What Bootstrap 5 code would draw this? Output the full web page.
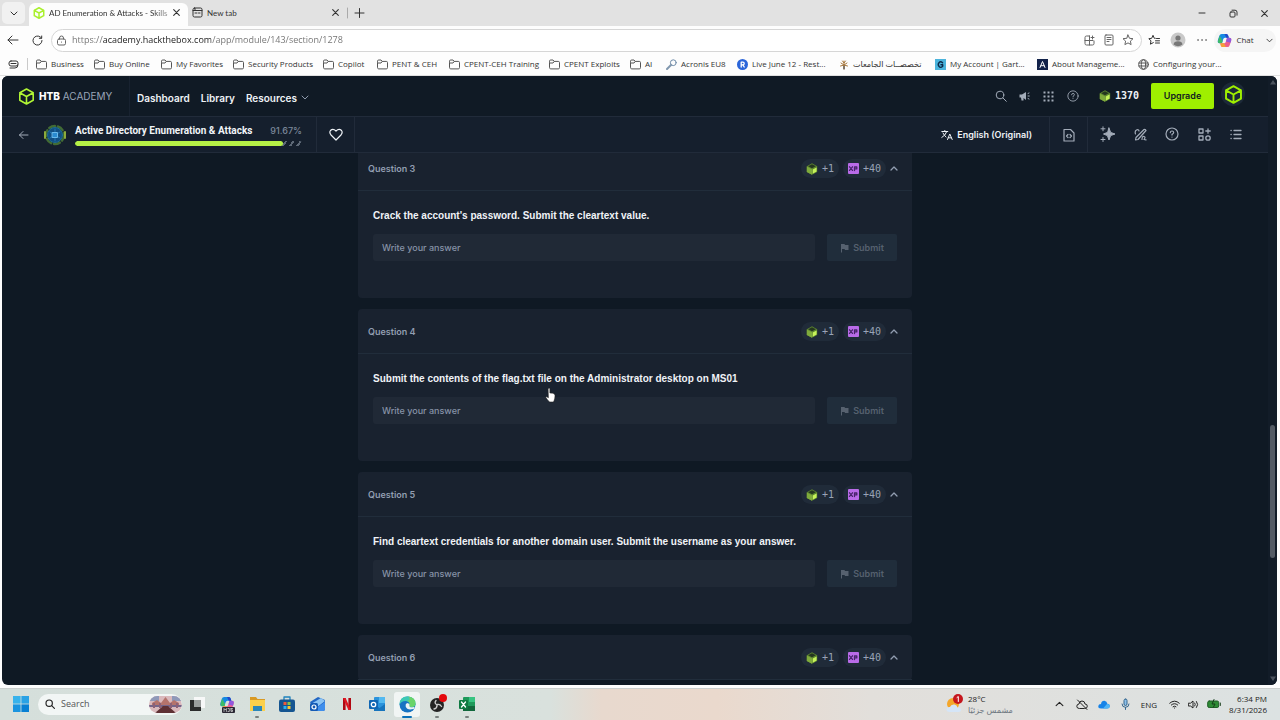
<!DOCTYPE html>
<html lang="en">
<head>
<meta charset="utf-8">
<meta name="viewport" content="width=device-width, initial-scale=1">
<title>AD Enumeration &amp; Attacks - Skills Assessment</title>
<link href="https://cdn.jsdelivr.net/npm/bootstrap@5.3.0/dist/css/bootstrap.min.css" rel="stylesheet">
<style>
  :root { --ui: "Open Sans", "Noto Sans", "DejaVu Sans", sans-serif; --app: Inter, "Liberation Sans", sans-serif; --mono: "DejaVu Sans Mono", monospace; --line: #212b3a; --lime: #9fef00; }
  body { font: 8px/12px var(--ui); color: #333; background: #fdfdfd; fill: none; stroke: currentColor; stroke-linecap: round; stroke-linejoin: round; }
  svg { display: block; flex: none; }
  button { font: inherit; color: inherit; background: none; border: 0; padding: 0; display: flex; align-items: center; justify-content: center; flex: none; }
  a { color: inherit; text-decoration: none; white-space: nowrap; }
  /* browser chrome */
  .tabstrip { height: 26px; background: #e2e2e2; padding-left: 2px; }
  .tab-menu { width: 23px; height: 22px; border-radius: 5px; background: #f1f1f1; }
  .tab-item { width: 159px; height: 23px; padding: 0 7px 0 4px; margin-top: 3px; font-family: Lato, var(--ui); }
  .tab-item.active { background: #fdfdfd; border-radius: 6px 6px 0 0; }
  .tab-title { white-space: nowrap; padding-left: 4px; }
  .tab-item.active .tab-title { -webkit-mask-image: linear-gradient(90deg, #000 85%, #0005); }
  .win-btn { width: 31px; height: 26px; }
  .toolbar { height: 28px; padding: 0 4px 0 1px; }
  .tool-btn { width: 24px; height: 22px; }
  .omnibox { height: 23px; border: 1px solid #d6d6d6; border-radius: 12px; background: #fff; padding: 0 4px 0 4px; margin-left: 2px; color: #666; }
  .omnibox input { border: 0; outline: 0; padding: 0 0 0 5px; font: 9px/14px var(--ui); color: transparent; background: linear-gradient(90deg, #707070 36px, #1c1c1c 36px 144px, #707070 144px); -webkit-background-clip: text; background-clip: text; }
  .omni-btn { width: 19px; height: 20px; }
  .chat-btn { width: 62px; height: 23px; border-radius: 12px; background: #f5f5f5; }
  .bookmarks { height: 22px; padding-bottom: 1px; border-bottom: 1px solid #e0e0e0; }
  .bookmark-grid { display: grid; grid-template-columns: 58px 67px 72px 90px 54px 72px 100px 81px 36px 71px 102px 96px 102px 101px 1fr; }
  .bookmark-grid a { display: flex; align-items: center; gap: 4px; }
  .bookmark-grid svg { color: #555; }
  /* academy page */
  .viewport-frame { margin: 0 3px 3px 2px; border-radius: 6px; background: #0f1924; font-family: var(--app); color: #eef2f6; min-height: 0; }
  .topnav { height: 41px; background: #101a25; border-bottom: 1px solid var(--line); font-size: 10px; font-weight: 600; }
  .brand-box { width: 128px; padding-left: 16px; border-right: 1px solid #182230; }
  .brand-box b { font-weight: 800; }
  .brand-box span { font-weight: 400; color: #99a5b8; }
  .nav-links { gap: 11px; padding: 3px 0 0 7px; }
  .nav-icon { width: 24px; height: 24px; color: #a3acb9; }
  .points { font-family: var(--mono); margin: 0 12px 0 14px; }
  .upgrade { width: 63px; height: 26px; background: var(--lime); border-radius: 2px; color: #111c22; font-size: 9px; }
  .avatar { width: 24px; height: 24px; border-radius: 50%; background: #1c2938; color: var(--lime); margin: 0 23px 4px 7px; }
  .subnav { height: 36px; background: #151f2d; border-bottom: 1px solid var(--line); }
  .course-box { width: 315px; padding: 0 14px 0 16px; border-right: 1px solid var(--line); color: #a3acb9; }
  .emblem { margin: 0 9px 0 15px; }
  .course-head { margin: 1px 0 4px; }
  .course-title { font: 700 10px/12px Roboto, sans-serif; white-space: nowrap; color: #f1f4f8; }
  .course-pct { font-size: 9px; font-weight: 500; color: #7b8799; }
  .meter { height: 5px; border-radius: 3px; overflow: hidden; background: repeating-linear-gradient(125deg, #151f2d 0 4px, #5d6876 4px 6px); }
  .meter .bar { height: 5px; border-radius: 3px; background: #b5f046; }
  .cell { border-right: 1px solid var(--line); width: 38px; color: #eef2f6; }
  .cell.quiet { color: #a3acb9; }
  .lang { font-size: 9px; font-weight: 600; padding-right: 17px; border-right: 1px solid var(--line); }
  .sub-icon { width: 32px; height: 34px; color: #a3acb9; }
  .question-list { width: 554px; max-width: 100%; margin: -7px auto 0; gap: 11px; }
  .question { background: #19222f; border-radius: 4px; font-size: 9px; }
  .question header { height: 45px; padding: 1px 14px 0 10px; border-bottom: 1px solid #212d3b; color: #929eb1; }
  .question header h2 { font-size: 9px; font-weight: 600; line-height: 12px; }
  .question form { padding: 17px 15px 37px; }
  .question label { font: 700 10px/15px "Liberation Sans", sans-serif; color: #f0f3f7; margin-bottom: 11px; display: block; }
  .question input { height: 27px; border: 0; border-radius: 3px; background: #202936; padding: 0 9px; color: #fff; font-weight: 500; }
  .question input::placeholder { color: #8793a7; }
  .submit { width: 70px; height: 27px; border-radius: 2px; background: #202d3b; color: #56616f; font-weight: 600; gap: 4px; }
  .reward { height: 19px; border-radius: 10px; background: #202b39; font: 10px/12px var(--mono); color: #98a4b6; padding: 0 5px; gap: 4px; }
  .scrollbar-track { width: 9px; background: #121c28; padding: 4px 2px; color: #4a525d; }
  .scrollbar-track .rail { display: grid; grid-template-rows: 337fr 131fr 117fr; }
  .scrollbar-track .thumb { grid-row: 2; background: #535b65; border-radius: 3px; }
  .pointer { position: absolute; left: 545px; top: 387px; stroke: #222; }
  /* taskbar */
  .taskbar { height: 32px; border-top: 1px solid #cbcfce; background: linear-gradient(90deg, #d5dfdb, #d9e1dd 43%, #e8d9ce 47%, #ead9cd 56%, #e2dfdb 68%, #dce2e2); padding: 0 13px 1px 6px; color: #222; }
  .app-btn { width: 30px; height: 30px; position: relative; }
  .app-btn.open::after { content: ""; position: absolute; bottom: 1px; width: 4px; height: 2px; border-radius: 1px; background: #7a817f; }
  .app-btn.current::before { content: ""; position: absolute; left: 2px; top: 3px; width: 26px; height: 25px; border-radius: 3px; background: #f1f5f4; }
  .app-btn.current::after { width: 10px; background: #0a70b8; }
  .app-btn svg { position: relative; stroke: none; }
  .search-pill { width: 144px; height: 21px; border-radius: 11px; background: #f2f6f5; padding-left: 7px; margin-left: 2px; overflow: hidden; }
  .search-pill input { border: 0; outline: 0; background: none; padding: 0 0 0 6px; font: 9px/14px var(--ui); width: 94px; }
  .search-pill input::placeholder { color: #555; }
  .tray { line-height: 11px; }
  .tray-btn { width: 22px; height: 24px; }
</style>
</head>
<body class="vh-100 d-flex flex-column overflow-hidden">

<svg width="0" height="0" class="position-absolute">
  <symbol id="folder" viewBox="0 0 11 11"><path d="M.5 3V2.200Q.5 1 1.700 1H4l1.200 1.400H9.300Q10.500 2.400 10.500 3.600V8.600Q10.500 9.900 9.300 9.900H1.700Q.5 9.900.5 8.600ZM.6 4H4l1.200-1.500"/></symbol>
  <symbol id="cube" viewBox="0 0 16 16"><path d="M8 1l6.300 3.500v7L8 15l-6.300-3.500v-7ZM1.700 4.500L8 8l6.300-3.500M8 8v7"/></symbol>
  <symbol id="cubelet" viewBox="0 0 12 12"><g stroke="none"><path d="M6 .3l5.200 2.900v5.700L6 11.800.8 8.900V3.200Z" fill="#5c8430"/><path d="M6 1.300l3.800 2L6 5.300l-3.800-2Z" fill="#24361f"/><path d="M.8 3.600L6 6.300v5.500L.8 8.900Z" fill="#7fab3c"/><path d="M6.700 6.600L10.600 4.500v4L6.700 10.800Z" fill="#c6f25a"/></g></symbol>
  <symbol id="down" viewBox="0 0 8 5"><path d="M1 1l3 3 3-3"/></symbol>
  <symbol id="up" viewBox="0 0 8 5"><path d="M1 4l3-3 3 3"/></symbol>
  <symbol id="cross" viewBox="0 0 8 8"><path d="M1.500 1.500l5 5M6.500 1.500l-5 5"/></symbol>
  <symbol id="glass" viewBox="0 0 12 12"><circle cx="5" cy="5" r="3.800"/><path d="M8 8l3.300 3.300"/></symbol>
  <symbol id="help" viewBox="0 0 14 14"><circle cx="7" cy="7" r="6"/><path d="M5.300 5.600Q5.400 4 7 4t1.700 1.500Q8.700 6.500 7 7.400v.7M7 10v.1"/></symbol>
  <symbol id="flag" viewBox="0 0 9 10"><path d="M1 1h3.500l.5 1h3.500v5H5L4.500 6H2v3.500H1Z" fill="currentColor" stroke="none"/></symbol>
  <symbol id="xp" viewBox="0 0 11 11"><rect width="11" height="11" rx="1" fill="#b96be8" stroke="none"/><path d="M1.500 3.800l3 3.600M4.500 3.800l-3 3.600M6.500 7.500V4h2.300v1.900H6.700" stroke="#47236a" stroke-width="1.300"/></symbol>
  <symbol id="copilot" viewBox="0 0 16 16"><g stroke="none"><path d="M5 1h5q1.500 0 2 2l.6 2H8.500Q7 5 6.500 7L5.300 11H3Q0 11 1 7.500L2.500 3Q3 1 5 1Z" fill="#1689e3"/><path d="M3 3q-2 5-2 6 0 2 2 2h2.300L6 8.500Z" fill="#3dbb67"/><path d="M11 15H6q-1.500 0-2-2l-.5-2h4Q9 11 9.500 9l1.200-4H13q3 0 2 3.500L13.500 13Q13 15 11 15Z" fill="#ec5f8d"/><path d="M10.700 5H13q3 0 2 3.500l-.6 2L9.500 9Z" fill="#9058dd"/><path d="M6 15q-1.500 0-2-2l-.5-2h4l2 4Z" fill="#f5a136"/><path d="M10 1q1.500 0 2 2l.6 2H10L8 1Z" fill="#2446c7"/></g></symbol>
</svg>

<header>
  <div class="tabstrip d-flex align-items-center">
    <button class="tab-menu" aria-label="Tab actions"><svg width="8" height="5"><use href="#down"/></svg></button>
    <div class="tab-item active d-flex align-items-center ms-1 pb-1">
      <svg width="12" height="12" style="color:#a9f02d"><use href="#cube" stroke-width="2"/></svg>
      <span class="tab-title flex-fill">AD Enumeration &amp; Attacks - Skills</span>
      <button aria-label="Close tab"><svg width="9" height="9"><use href="#cross"/></svg></button>
    </div>
    <div class="tab-item d-flex align-items-center pb-1">
      <svg width="11" height="11" viewBox="0 0 11 11"><rect x="1" y="1" width="9" height="9" rx="1.500"/><path d="M1 3.500h9M3 1.500v2M3 6h2M6.500 6H8"/></svg>
      <span class="tab-title flex-fill">New tab</span>
      <button aria-label="Close tab"><svg width="9" height="9"><use href="#cross"/></svg></button>
    </div>
    <button aria-label="New tab"><svg width="18" height="12" viewBox="0 0 18 12"><path d="M.5 1v10" stroke="#aaa"/><path d="M8 6h9M12.500 1.500v9"/></svg></button>
    <div class="ms-auto d-flex">
      <button class="win-btn" aria-label="Minimize"><svg width="9" height="8" viewBox="0 0 9 8"><path d="M1 4h6"/></svg></button>
      <button class="win-btn" aria-label="Restore"><svg width="9" height="9" viewBox="0 0 9 9"><rect x="1" y="3" width="5" height="5" rx="1"/><path d="M3 1.200h3q2 0 2 2v3"/></svg></button>
      <button class="win-btn" aria-label="Close"><svg width="9" height="9"><use href="#cross"/></svg></button>
    </div>
  </div>

  <div class="toolbar d-flex align-items-center">
    <button class="tool-btn" aria-label="Back"><svg width="12" height="10" viewBox="0 0 12 10"><path d="M11 5H1M5 1L1 5l4 4"/></svg></button>
    <button class="tool-btn" aria-label="Reload"><svg width="11" height="11" viewBox="0 0 11 11"><path d="M10 5.500A4.500 4.500 0 1 1 8.500 2.200L9.500 3M9.700 1v2.300H7.300"/></svg></button>
    <div class="omnibox d-flex align-items-center flex-fill">
      <svg width="11" height="11" viewBox="0 0 11 11"><rect x="1.500" y="4" width="8" height="6" rx="1.500"/><path d="M3.500 4V3q0-2 2-2t2 2v1M5.500 7v.2"/></svg>
      <input class="flex-fill" type="text" aria-label="Address" value="https://academy.hackthebox.com/app/module/143/section/1278">
      <button class="omni-btn" aria-label="Split screen"><svg width="11" height="11" viewBox="0 0 11 11"><path d="M5.500 1H2.500Q1 1 1 2.500v6Q1 10 2.500 10h6Q10 10 10 8.500V6M5.500 1v9M1 5.500h8M8.500 1v3M7 2.500h3"/></svg></button>
      <button class="omni-btn" aria-label="Reading view"><svg width="10" height="12" viewBox="0 0 10 12"><rect x="1" y="1" width="8" height="10" rx="1"/><path d="M3 3.500h4M3 5.500h4M3 7.500h2"/></svg></button>
      <button class="omni-btn" aria-label="Favorite"><svg width="12" height="12" viewBox="0 0 12 12"><path d="M6 1l1.500 3.300 3.500.4-2.600 2.400.7 3.500L6 8.900l-3.100 1.700.7-3.500L1 4.700l3.500-.4Z"/></svg></button>
    </div>
    <button class="tool-btn" aria-label="Favorites"><svg width="12" height="12" viewBox="0 0 12 12"><path d="M7.300 4.300h-1L5 1.300 3.700 4.300.8 4.700 3 6.800l-.6 3.400L5.300 8.600M8.500 4.500h3M7.500 6.800h4M7.500 9h4"/></svg></button>
    <button class="tool-btn" aria-label="Profile"><svg width="16" height="16" viewBox="0 0 16 16" stroke="none"><circle cx="8" cy="8" r="7.500" fill="#c9c9c9"/><circle cx="8" cy="6" r="2.600" fill="#777"/><path d="M3.500 12.500Q4 9.300 8 9.300t4.500 3.200Q8 16 3.500 12.500Z" fill="#777"/></svg></button>
    <button class="tool-btn" aria-label="More"><svg width="10" height="4" viewBox="0 0 10 4" stroke-width="1.500"><path d="M1 2h.1M5 2h.1M9 2h.1"/></svg></button>
    <button class="chat-btn" aria-label="Copilot chat"><svg width="15" height="15"><use href="#copilot"/></svg><span class="ps-1 pe-2 me-1">Chat</span><svg width="7" height="5"><use href="#down"/></svg></button>
  </div>

  <nav class="bookmarks d-flex align-items-center" aria-label="Bookmarks">
    <svg class="ms-2 me-2" width="11" height="9" viewBox="0 0 11 9"><rect x="1" y="1" width="9" height="5" rx="2"/><path d="M3 3.500h5M2 8h5q3 0 3-3"/></svg>
    <div class="vr my-1 me-2"></div>
    <div class="bookmark-grid flex-fill">
      <a href="#"><svg width="11" height="11"><use href="#folder"/></svg>Business</a>
      <a href="#"><svg width="11" height="11"><use href="#folder"/></svg>Buy Online</a>
      <a href="#"><svg width="11" height="11"><use href="#folder"/></svg>My Favorites</a>
      <a href="#"><svg width="11" height="11"><use href="#folder"/></svg>Security Products</a>
      <a href="#"><svg width="11" height="11"><use href="#folder"/></svg>Copilot</a>
      <a href="#"><svg width="11" height="11"><use href="#folder"/></svg>PENT &amp; CEH</a>
      <a href="#"><svg width="11" height="11"><use href="#folder"/></svg>CPENT-CEH Training</a>
      <a href="#"><svg width="11" height="11"><use href="#folder"/></svg>CPENT Exploits</a>
      <a href="#"><svg width="11" height="11"><use href="#folder"/></svg>AI</a>
      <a href="#"><svg width="11" height="11" viewBox="0 0 11 11"><circle cx="7.300" cy="3.700" r="2.900" stroke="#6f8ba8"/><path d="M5 6L1 10" stroke="#8097ae" stroke-width="2"/></svg>Acronis EU8</a>
      <a href="#"><svg width="11" height="11" viewBox="0 0 11 11"><circle cx="5.500" cy="5.500" r="5.500" fill="#2b65d9" stroke="none"/><path d="M4.200 8V3.200h1.700q1.300 0 1.300 1.300T5.900 5.800H4.300M5.900 5.800L7.200 8" stroke="#fff" stroke-width="1.300"/></svg>Live June 12 - Rest...</a>
      <a href="#"><svg width="10" height="11" viewBox="0 0 10 11"><path d="M5 2v8M2 4l3 2 3-2M1.500 7L5 6l3.500 1M3.500 2L5 4l1.500-2" stroke="#a9783c"/><path d="M5 7v3" stroke="#333"/></svg>تخصصــات الجامعات</a>
      <a href="#"><svg width="11" height="11" viewBox="0 0 11 11"><rect width="11" height="11" fill="#4bb4dc" stroke="none"/><path d="M7.600 3.700Q5.500 2 4 3.700T4 7.400t3.700-.2V5.700H6" stroke="#0c2b4a" stroke-width="1.400"/></svg>My Account | Gart...</a>
      <a href="#"><svg width="11" height="11" viewBox="0 0 11 11"><rect width="11" height="11" fill="#12224a" stroke="none"/><path d="M3 8.500L5.500 2.500 8 8.500M4 6.700h3" stroke="#fff"/></svg>About Manageme...</a>
      <a href="#"><svg width="11" height="11" viewBox="0 0 11 11"><circle cx="5.500" cy="5.500" r="4.800"/><ellipse cx="5.500" cy="5.500" rx="2.200" ry="4.800"/><path d="M1 4h9M1 7h9"/></svg>Configuring your...</a>
    </div>
  </nav>
</header>

<div class="viewport-frame flex-fill d-flex overflow-hidden">
  <div class="flex-fill d-flex flex-column overflow-hidden">
    <nav class="topnav d-flex align-items-center flex-shrink-0">
      <a href="#" class="brand-box d-flex align-items-center align-self-stretch gap-1"><svg width="17" height="17" style="color:#b0f534"><use href="#cube" stroke-width="1.500"/></svg><span><b class="text-white">HTB</b> ACADEMY</span></a>
      <div class="nav-links d-flex">
        <a href="#">Dashboard</a>
        <a href="#">Library</a>
        <a href="#" class="d-flex align-items-center gap-1">Resources <svg width="8" height="5" style="color:#8d99ac"><use href="#down"/></svg></a>
      </div>
      <div class="ms-auto d-flex align-items-center">
        <button class="nav-icon" aria-label="Search"><svg width="12" height="12"><use href="#glass"/></svg></button>
        <button class="nav-icon" aria-label="News"><svg width="11" height="10" viewBox="0 0 11 10"><path d="M.5 3.500H3L7 1v8L4.500 7V9.500H2.500L2 6.500H.5Z" fill="currentColor" stroke="none"/><path d="M9 2.500L10 2M9 5h1.300M9 7.500L10 8"/></svg></button>
        <button class="nav-icon" aria-label="Apps"><svg width="11" height="11" viewBox="0 0 11 11" stroke-width="2" stroke-linecap="butt"><path d="M.5 1.500h2m2 0h2m2 0h2M.5 5.500h2m2 0h2m2 0h2M.5 9.500h2m2 0h2m2 0h2"/></svg></button>
        <button class="nav-icon" aria-label="Help"><svg width="12" height="12"><use href="#help"/></svg></button>
        <div class="points d-flex align-items-center gap-1"><svg width="12" height="12"><use href="#cubelet"/></svg>1370</div>
        <button class="upgrade">Upgrade</button>
        <button class="avatar" aria-label="Account"><svg width="19" height="19"><use href="#cube" stroke-width="1.600"/></svg></button>
      </div>
    </nav>

    <div class="subnav d-flex align-items-stretch flex-shrink-0">
      <div class="course-box d-flex align-items-center">
        <a href="#" aria-label="Back"><svg width="11" height="10" viewBox="0 0 11 10"><path d="M10 5H1.500M5 1.500L1.500 5 5 8.500"/></svg></a>
        <svg class="emblem" width="22" height="22" viewBox="0 0 22 22"><circle cx="11" cy="11" r="9" stroke="#426b35" stroke-width="2.500" stroke-dasharray="6 3"/><circle cx="11" cy="11" r="7.500" fill="#124e83" stroke="#1d6f96"/><path d="M1 8v6M21 8v6" stroke="#8cab3c" stroke-width="2"/><path d="M11 5v12M6 8l10 6M16 8L6 14" stroke="#2377b4"/><rect x="8.500" y="8.500" width="5" height="5" fill="#2a8ad0" stroke="#6bb9ec"/></svg>
        <div class="flex-fill">
          <div class="course-head d-flex justify-content-between align-items-center"><span class="course-title">Active Directory Enumeration &amp; Attacks</span><span class="course-pct">91.67%</span></div>
          <div class="meter" role="progressbar" aria-valuenow="91.67"><div class="bar" style="width:91.67%"></div></div>
        </div>
      </div>
      <button class="cell" aria-label="Like"><svg width="14" height="13" viewBox="0 0 14 13" stroke-width="1.200"><path d="M7 12L2 7Q0 4.500 1.500 2.500 4 0 7 3q3-3 5.500-.5Q14 4.500 12 7Z"/></svg></button>
      <button class="lang ms-auto gap-1"><svg width="12" height="10" viewBox="0 0 12 10"><path d="M.8 1.500h6M3.800.5v1M5.800 1.500Q4.500 5.500.8 7.500M2 3q1.500 3 3 4M6.500 9.500L8.800 4l2.400 5.500M7.300 7.800h3"/></svg>English (Original)</button>
      <button class="cell quiet" aria-label="Source"><svg width="12" height="14" viewBox="0 0 12 14"><path d="M1 1.500h6.500L11 5v8H1ZM5 6.500L3.500 8 5 9.500M7 6.500L8.500 8 7 9.500" stroke-width="1.200"/></svg></button>
      <div class="d-flex ps-1 pe-3">
        <button class="sub-icon" aria-label="Assistant"><svg width="16" height="16" viewBox="0 0 16 16"><path d="M9 2l1.600 4.400L15 8l-4.400 1.600L9 14l-1.600-4.400L3.500 8l3.900-1.600Z" fill="currentColor"/><path d="M3 .8v4M1 2.800h4M3 11.500v4M1 13.500h4"/></svg></button>
        <button class="sub-icon" aria-label="Notes"><svg width="13" height="13" viewBox="0 0 13 13"><path d="M1.500 6Q.5 3 2.500 2t2.500 1M4 11.500l-2.500.5.500-2.500L10 1.500q1.500-.5 2 1ZM8 11.500q0-3.500 2-3t0 3l2 .3" stroke-width="1.200"/></svg></button>
        <button class="sub-icon" aria-label="Help"><svg width="14" height="14"><use href="#help" stroke-width="1.200"/></svg></button>
        <button class="sub-icon" aria-label="Widgets"><svg width="13" height="13" viewBox="0 0 13 13" stroke-width="1.300"><rect x="1" y="1" width="4" height="4"/><rect x="1" y="8" width="4" height="4"/><circle cx="10" cy="10" r="2.200"/><path d="M10 .8v4.400M7.800 3h4.400"/></svg></button>
        <button class="sub-icon" aria-label="Contents"><svg width="12" height="11" viewBox="0 0 12 11" stroke-width="1.300"><path d="M1 1.500h.2M4 1.500h7M1 5.500h.2M4 5.500h7M1 9.500h.2M4 9.500h7"/></svg></button>
      </div>
    </div>

    <main class="flex-fill overflow-hidden">
      <div class="question-list d-flex flex-column">
        <section class="question">
          <header class="d-flex align-items-center gap-1"><h2 class="me-auto mb-0">Question 3</h2><span class="reward d-flex align-items-center"><svg width="12" height="12"><use href="#cubelet"/></svg>+1</span><span class="reward d-flex align-items-center"><svg width="11" height="11"><use href="#xp"/></svg>+40</span><button aria-label="Collapse"><svg width="8" height="5"><use href="#up" stroke-width="1.300"/></svg></button></header>
          <form><label for="q3">Crack the account's password. Submit the cleartext value.</label><div class="d-flex"><input id="q3" class="flex-fill me-2" type="text" placeholder="Write your answer"><button type="button" class="submit ms-1" disabled><svg width="9" height="10"><use href="#flag"/></svg>Submit</button></div></form>
        </section>
        <section class="question">
          <header class="d-flex align-items-center gap-1"><h2 class="me-auto mb-0">Question 4</h2><span class="reward d-flex align-items-center"><svg width="12" height="12"><use href="#cubelet"/></svg>+1</span><span class="reward d-flex align-items-center"><svg width="11" height="11"><use href="#xp"/></svg>+40</span><button aria-label="Collapse"><svg width="8" height="5"><use href="#up" stroke-width="1.300"/></svg></button></header>
          <form><label for="q4">Submit the contents of the flag.txt file on the Administrator desktop on MS01</label><div class="d-flex"><input id="q4" class="flex-fill me-2" type="text" placeholder="Write your answer"><button type="button" class="submit ms-1" disabled><svg width="9" height="10"><use href="#flag"/></svg>Submit</button></div></form>
        </section>
        <section class="question">
          <header class="d-flex align-items-center gap-1"><h2 class="me-auto mb-0">Question 5</h2><span class="reward d-flex align-items-center"><svg width="12" height="12"><use href="#cubelet"/></svg>+1</span><span class="reward d-flex align-items-center"><svg width="11" height="11"><use href="#xp"/></svg>+40</span><button aria-label="Collapse"><svg width="8" height="5"><use href="#up" stroke-width="1.300"/></svg></button></header>
          <form><label for="q5">Find cleartext credentials for another domain user. Submit the username as your answer.</label><div class="d-flex"><input id="q5" class="flex-fill me-2" type="text" placeholder="Write your answer"><button type="button" class="submit ms-1" disabled><svg width="9" height="10"><use href="#flag"/></svg>Submit</button></div></form>
        </section>
        <section class="question">
          <header class="d-flex align-items-center gap-1"><h2 class="me-auto mb-0">Question 6</h2><span class="reward d-flex align-items-center"><svg width="12" height="12"><use href="#cubelet"/></svg>+1</span><span class="reward d-flex align-items-center"><svg width="11" height="11"><use href="#xp"/></svg>+40</span><button aria-label="Collapse"><svg width="8" height="5"><use href="#up" stroke-width="1.300"/></svg></button></header>
        </section>
      </div>
    </main>
  </div>
  <div class="scrollbar-track d-flex flex-column" aria-hidden="true">
    <svg width="6" height="5" viewBox="0 0 6 5"><path d="M0 4.500L3 0l3 4.500Z" fill="currentColor" stroke="none"/></svg>
    <div class="rail flex-fill"><div class="thumb"></div></div>
    <svg width="6" height="5" viewBox="0 0 6 5"><path d="M0 .5h6L3 5Z" fill="currentColor" stroke="none"/></svg>
  </div>
</div>

<footer class="taskbar d-flex align-items-center flex-shrink-0">
  <button class="app-btn" aria-label="Start"><svg width="16" height="16" viewBox="0 0 16 16"><path d="M0 0h7.600v7.600H0Z" fill="#38b3ec"/><path d="M8.400 0H16v7.600H8.400Z" fill="#2aa2e5"/><path d="M0 8.400h7.600V16H0Z" fill="#1a94df"/><path d="M8.400 8.400H16V16H8.400Z" fill="#087fd3"/></svg></button>
  <div class="search-pill d-flex align-items-center">
    <svg width="10" height="10" viewBox="0 0 12 12" stroke-width="1.400"><use href="#glass"/></svg>
    <input type="search" placeholder="Search" aria-label="Search">
    <svg width="33" height="17" viewBox="0 0 33 17" stroke="none"><defs><clipPath id="oval"><rect width="33" height="17" rx="8.500"/></clipPath></defs><g clip-path="url(#oval)"><rect width="33" height="17" fill="#dab9bd"/><path d="M0 0h10v5H0ZM23 0h10v5H23Z" fill="#8f99b9"/><path d="M3 7l5-3 4 3 4.500-6L21 7l4-3 5 3v2H3Z" fill="#b4736c"/><path d="M0 9h33v2H0Z" fill="#75658a"/><path d="M4 7h2v5H4ZM10 7h2v5h-2ZM21 7h2v5h-2ZM27 7h2v5h-2Z" fill="#8d6177"/><path d="M14 10h5l8 7H6Z" fill="#5f3034"/></g></svg>
  </div>
  <button class="app-btn" aria-label="Task view"><svg width="16" height="16" viewBox="0 0 16 16"><rect x="5" y="1" width="11" height="11" fill="#f7f8f8"/><rect x="1" y="4" width="11" height="11" fill="#2b2b2b"/><rect x="5" y="4" width="7" height="7" fill="#9b9e9d"/></svg></button>
  <button class="app-btn" aria-label="Microsoft 365 Copilot"><svg width="18" height="17" viewBox="0 0 18 17"><use href="#copilot" width="16" height="15" x="1"/><rect x="4" y="11" width="13" height="6" rx="1" fill="#2a2733"/><path d="M6 15.500v-3l1.200 1.500 1.200-1.500v3M10 12.500h1.300v3H10M13 12.500h1.500M13 12.500v3h1.500V14H13" fill="none" stroke="#ddd" stroke-width=".7"/></svg></button>
  <button class="app-btn open" aria-label="File Explorer"><svg width="17" height="16" viewBox="0 0 17 16"><path d="M1 1h6l1.500 2H16v4H1Z" fill="#d99a23"/><path d="M1 4h15v11H1Z" fill="#fbd04b"/><path d="M4 10h9v5H4Z" fill="#2b87ba"/></svg></button>
  <button class="app-btn" aria-label="Store"><svg width="16" height="16" viewBox="0 0 16 16"><path d="M5 4V1h6v3" fill="none" stroke="#1f83bd" stroke-width="1.300"/><rect x="0" y="3.500" width="16" height="12.500" rx="2" fill="#155591"/><path d="M4.500 6h3v3h-3Z" fill="#f05a3b"/><path d="M8.500 6h3v3h-3Z" fill="#8bc34a"/><path d="M4.500 10h3v3h-3Z" fill="#2fb1ef"/><path d="M8.500 10h3v3h-3Z" fill="#fcc72c"/></svg></button>
  <button class="app-btn" aria-label="Mail"><svg width="17" height="16" viewBox="0 0 17 16"><path d="M1 6l8-5 7 3v9q0 2-2 2H5Z" fill="#2166c4"/><path d="M2 8L12 2l4 3-9 7Z" fill="#8cc4f4"/><path d="M6 13l10-7v7q0 2-2 2H7Z" fill="#3f8eec"/><rect x="1" y="7" width="8" height="8" rx="1.500" fill="#145ab5"/><circle cx="5" cy="11" r="2" fill="none" stroke="#fff" stroke-width="1.200"/></svg></button>
  <button class="app-btn" aria-label="Netflix"><svg width="8" height="12" viewBox="0 0 8 12"><path d="M0 0h2.600v12H0ZM5.400 0H8v12H5.400Z" fill="#b00812"/><path d="M0 0h2.600L8 12H5.400Z" fill="#e01622"/></svg></button>
  <button class="app-btn" aria-label="Outlook"><svg width="17" height="16" viewBox="0 0 17 16"><rect x="5" y="1" width="11" height="14" rx="1" fill="#2a93dc"/><path d="M10 1h6v6h-6Z" fill="#53b9f0"/><path d="M5 8l5.500 4L16 8v7H5Z" fill="#1674bd"/><rect y="4" width="9" height="9" rx="1" fill="#0f66b4"/><circle cx="4.500" cy="8.500" r="2.200" fill="none" stroke="#fff" stroke-width="1.300"/></svg></button>
  <button class="app-btn open current" aria-label="Edge"><svg width="17" height="17" viewBox="0 0 17 17"><circle cx="8.500" cy="8.500" r="8" fill="#1673c2"/><path d="M.5 8Q1 0 9 .5q7.500 1 7.500 7 0 3.500-4 3.500-3 0-2-2.500Q10.500 5 6.500 5 2 5 .5 9Z" fill="#3bc9b5"/><path d="M9 .5q7.500 1 7.500 7 0 3.500-4 3.500-3 0-2-2.500 1-3-3-3.500Q13 4 9 .5Z" fill="#6bd46a"/><path d="M8 7q-2 1-1.300 3.500Q8 14.500 14.500 13L16 12q-.7-1-1.500-1-2 .7-3.500 0-1-.6-.5-2.500Q10 7 8 7Z" fill="#eaf4f4"/></svg></button>
  <button class="app-btn open" aria-label="OBS Studio"><svg width="20" height="20" viewBox="0 0 20 20"><circle cx="10" cy="11" r="7" fill="#242424"/><path d="M9.500 10.500Q7 9 9 6.500M10.500 10.500q2.500-.5 4 2M10 11.500q0 3-3 3.500" fill="none" stroke="#ccc" stroke-width="1.400"/><circle cx="16" cy="4" r="4" fill="#e4080c"/></svg></button>
  <button class="app-btn open" aria-label="Excel"><svg width="17" height="16" viewBox="0 0 17 16"><rect x="4" y="1" width="12" height="14" rx="1" fill="#1f9a5b"/><path d="M10 1h6v5h-6Z" fill="#37c481"/><path d="M4 10h12v5H4Z" fill="#12683c"/><rect y="4" width="9" height="9" rx="1" fill="#107a42"/><path d="M2.500 6l4 5M6.500 6l-4 5" stroke="#fff" stroke-width="1.300"/></svg></button>

  <div class="tray ms-auto d-flex align-items-center">
    <a href="#" class="d-flex align-items-center me-4 pe-1">
      <svg width="18" height="20" viewBox="0 0 18 20" stroke="none"><circle cx="7" cy="10" r="6" fill="#f4a62a"/><path d="M4 18q-4 0-3.500-3 .5-2.500 3.500-2 1-3 4.500-2.500 2.500.5 3 3 3.500 0 3.500 2.300T12 18Z" fill="#d5e5f7"/><circle cx="12" cy="5" r="5" fill="#c5161d"/><path d="M11 3.500l1.300-1v5" stroke="#fff"/></svg>
      <span class="ps-1">28°C<br><bdi class="text-secondary">مشمس جزئيًا</bdi></span>
    </a>
    <button class="tray-btn ms-2" aria-label="Hidden icons"><svg width="9" height="6" viewBox="0 0 8 5"><use href="#up"/></svg></button>
    <button class="tray-btn" aria-label="Offline"><svg width="12" height="11" viewBox="0 0 12 11"><path d="M3 9.500Q.8 9.500.8 7.300T3 5Q3.200 2 6 2t3 3q2.300 0 2.300 2.200T9 9.500ZM1.500 1l9.500 9.500"/></svg></button>
    <button class="tray-btn" aria-label="OneDrive"><svg width="12" height="9" viewBox="0 0 12 9" stroke="none"><path d="M3 8.500Q0 8.500.3 6 .5 4 3 4 3.500.5 6.500.7 9 1 9.300 3.700q2.600.2 2.500 2.500T9 8.500Z" fill="#1683e8"/><path d="M5 8.500L9 4q2.900 0 2.800 2.300T9 8.500Z" fill="#50b5f7"/></svg></button>
    <button class="tray-btn" aria-label="Microphone"><svg width="9" height="12" viewBox="0 0 9 12"><rect x="3" y="1" width="3" height="6.500" rx="1.500" fill="#8fc1e9" stroke="#34678f"/><path d="M1 6q0 3.300 3.500 3.300T8 6M4.500 9.500v2" stroke="#34678f"/></svg></button>
    <button class="px-1 me-2" aria-label="Language">ENG</button>
    <button class="me-2" aria-label="Wi-Fi"><svg width="11" height="9" viewBox="0 0 11 9"><path d="M.7 3.200q4.800-4.300 9.600 0M2.300 5q3.200-2.800 6.400 0M4 6.700q1.500-1.200 3 0M5.500 8v.1"/></svg></button>
    <button class="me-2" aria-label="Volume"><svg width="11" height="9" viewBox="0 0 11 9"><path d="M.7 3.200H2.500L5 1v7L2.500 6H.7ZM6.800 3q1 1.500 0 3M8.500 1.500q2.500 3 0 6"/></svg></button>
    <button class="me-2" aria-label="Battery"><svg width="14" height="10" viewBox="0 0 14 10"><rect x=".7" y="2" width="11" height="6.500" rx="1.500" fill="#2e8b35" stroke="#215f28"/><path d="M13.300 4v2.500M7 .5L5 5h3L6.500 8" stroke="#173d1a"/></svg></button>
    <time class="text-end">6:34 PM<br>8/31/2026</time>
  </div>
</footer>

<svg class="pointer" width="11" height="16" viewBox="0 0 11 16" stroke-width=".6"><path d="M3.200 1.500q1-1 1.700 0V6q3.500-.2 4.700 1.200.8 1 .2 4-.6 2.500-1.300 3.800H4.500Q2.500 13 .8 10.500q.3-1.300 2.400 0Z" fill="#fff"/></svg>
<script src="https://cdn.jsdelivr.net/npm/bootstrap@5.3.0/dist/js/bootstrap.bundle.min.js"></script>
</body>
</html>
